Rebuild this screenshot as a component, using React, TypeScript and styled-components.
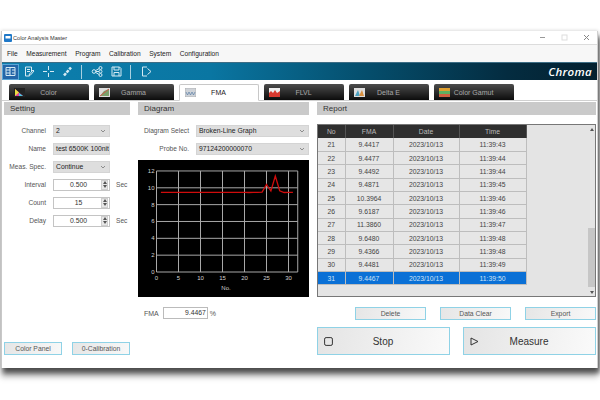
import React from "react";
import styled, { createGlobalStyle } from "styled-components";

const Global = createGlobalStyle`
  html, body { margin: 0; padding: 0; background: #fff; width: 600px; height: 400px; overflow: hidden; }
  body { font-family: "Liberation Sans", Arial, sans-serif; }
  * { box-sizing: border-box; }
`;

const Page = styled.div`
  padding: 31px 2px 0 1px;
`;
const Win = styled.div`
  width: 597px;
  height: 337px;
  background: #fff;
  display: flex;
  flex-direction: column;
  border-left: 1px solid #c8c8c8;
  border-right: 1px solid #d0d0d0;
  box-shadow: 0 -1px 3px rgba(0,0,0,0.12), 2px 5px 5px rgba(0,0,0,0.6), 0 9px 6px rgba(0,0,0,0.25);
`;
const TitleBar = styled.div`
  height: 14px;
  display: flex;
  align-items: center;
  padding: 0 0 0 2px;
  gap: 1px;
  font-size: 5.6px;
  color: #333;
  border-bottom: 1px solid #dcdcdc;
`;
const TitleText = styled.span`
  flex: 1;
`;
const WinButton = styled.span`
  width: 21px;
  display: flex;
  justify-content: center;
  align-items: center;
`;
const MenuBar = styled.div`
  height: 17px;
  background: #f7f7f7;
  display: flex;
  align-items: center;
  padding-left: 5px;
  gap: 8.6px;
  font-size: 6.6px;
  color: #222;
`;
const Toolbar = styled.div`
  height: 18px;
  background: linear-gradient(90deg, #0d7fae 0%, #0a76a2 35%, #05506f 60%, #042c40 85%, #03202f 100%);
  display: flex;
  align-items: center;
  border-top: 1px solid #3d6d85;
`;
const ToolBtn = styled.span<{ $active?: boolean }>`
  width: 17px;
  height: 16px;
  margin-right: 2px;
  display: flex;
  align-items: center;
  justify-content: center;
  background: ${(p) => (p.$active ? "#2566a8" : "transparent")};
  border: 1px solid ${(p) => (p.$active ? "#5aa6d6" : "transparent")};
`;
const ToolSep = styled.span`
  width: 1px;
  height: 14px;
  background: #a9d0e0;
  margin: 0 7px 0 3px;
`;
const Brand = styled.span`
  margin-left: auto;
  margin-right: 5px;
  font-family: "Open Sans", sans-serif;
  font-style: italic;
  font-weight: 600;
  font-size: 11.5px;
  letter-spacing: 0.3px;
  color: #fff;
`;
const TabRow = styled.div`
  height: 21px;
  padding: 4px 0 0 7px;
  display: flex;
  gap: 5px;
  border-bottom: 1px solid #d0d0d0;
`;
const Tab = styled.div<{ $active?: boolean }>`
  width: 80px;
  height: ${(p) => (p.$active ? "17px" : "16px")};
  display: flex;
  align-items: center;
  font-size: 7px;
  padding-left: 5px;
  color: ${(p) => (p.$active ? "#222" : "#a8a8a8")};
  background: ${(p) => (p.$active ? "#fff" : "linear-gradient(#4c4c4c, #0c0c0c)")};
  border: ${(p) => (p.$active ? "1px solid #c8c8c8" : "none")};
  border-bottom: ${(p) => (p.$active ? "1px solid #fff" : "none")};
  border-radius: 2px 2px 0 0;
`;
const TabLabel = styled.span`
  flex: 1;
  text-align: center;
  padding-right: 17px;
`;
const Main = styled.div`
  flex: 1;
  display: grid;
  grid-template-columns: 126px 171px 279px;
  column-gap: 8px;
  padding: 1px 0 0 2px;
`;
const Column = styled.div`
  display: flex;
  flex-direction: column;
  min-height: 0;
`;
const SectionHead = styled.div`
  height: 13px;
  background: #cacaca;
  font-size: 8px;
  color: #333;
  display: flex;
  align-items: center;
  padding-left: 6px;
  flex: none;
`;
const Form = styled.div`
  display: flex;
  flex-direction: column;
  gap: 7px;
  padding-top: 10px;
`;
const FormRow = styled.div`
  display: flex;
  align-items: center;
  height: 11px;
`;
const Label = styled.span<{ $w: number }>`
  width: ${(p) => p.$w}px;
  text-align: right;
  font-size: 6.6px;
  color: #555;
  margin-right: 7px;
  white-space: nowrap;
  flex: none;
`;
const SelectBox = styled.div<{ $w: number }>`
  width: ${(p) => p.$w}px;
  height: 12px;
  background: #dedede;
  border: 1px solid #d4d4d4;
  display: flex;
  align-items: center;
  justify-content: space-between;
  padding: 0 3px 0 2px;
  font-size: 6.8px;
  color: #222;
  white-space: nowrap;
  overflow: hidden;
`;
const NumBox = styled.div`
  width: 57px;
  height: 12px;
  background: #fff;
  border: 1px solid #c4c4c4;
  display: flex;
  align-items: center;
  font-size: 6.8px;
  color: #333;
`;
const NumValue = styled.span`
  flex: 1;
  text-align: center;
  padding-left: 2px;
`;
const Spin = styled.span`
  width: 7px;
  height: 10px;
  margin-right: 1px;
  background: #e8e8e8;
  border: 1px solid #cfcfcf;
  display: flex;
  flex-direction: column;
  align-items: center;
  justify-content: space-around;
`;
const Unit = styled.span`
  font-size: 6.6px;
  color: #555;
  margin-left: 6px;
`;
const BottomLeft = styled.div`
  margin-top: auto;
  margin-bottom: 13px;
  display: flex;
  justify-content: space-between;
`;
const SkyButton = styled.button<{ $w?: number; $h?: number }>`
  width: ${(p) => (p.$w ? `${p.$w}px` : "auto")};
  height: ${(p) => p.$h ?? 13}px;
  border: 1px solid #8fd2e6;
  background: linear-gradient(100deg, #e6e6e6, #f8f8f8);
  font-family: inherit;
  font-size: 6.8px;
  color: #555;
  padding: 0;
  border-radius: 0;
`;
const ChartWrap = styled.div`
  margin-top: 6px;
  height: 137px;
  background: #000;
  flex: none;
`;
const FmaRow = styled.div`
  display: flex;
  align-items: center;
  margin-top: 10px;
  padding-left: 6px;
  font-size: 7px;
  color: #555;
`;
const FmaInput = styled.div`
  width: 45px;
  height: 12px;
  border: 1px solid #bbb;
  margin: 0 2px 0 4px;
  text-align: right;
  padding-right: 1px;
  font-size: 6.8px;
  line-height: 10px;
  color: #333;
`;
const ReportBox = styled.div`
  margin-top: 9px;
  height: 173px;
  border: 1px solid #777;
  background: #e4e4e4;
  display: flex;
  flex: none;
`;
const Table = styled.table`
  width: 208px;
  border-collapse: collapse;
  table-layout: fixed;
  align-self: flex-start;
  font-size: 6.8px;
  color: #444;
`;
const Th = styled.th<{ $w: number }>`
  width: ${(p) => p.$w}px;
  height: 13px;
  background: #2f2f2f;
  color: #bbb;
  font-weight: 400;
  padding: 0;
  border-right: 1px solid #555;
`;
const Tr = styled.tr<{ $sel?: boolean }>`
  height: 13.35px;
  background: ${(p) => (p.$sel ? "#0a70d6" : "#e6e6e6")};
  color: ${(p) => (p.$sel ? "#cfe3f7" : "#444")};
`;
const Td = styled.td`
  padding: 0;
  text-align: center;
  border-right: 1px solid #bdbdbd;
  border-bottom: 1px solid #bdbdbd;
`;
const ScrollBar = styled.div`
  margin-left: auto;
  width: 7px;
  display: flex;
  flex-direction: column;
  justify-content: space-between;
  align-items: center;
  padding: 3px 0 2px;
  background: linear-gradient(#e4e4e4 60%, #c6c6c6 60%, #c6c6c6 95%, #e4e4e4 95%);
`;
const ActionRow = styled.div`
  margin-top: 10px;
  display: flex;
  justify-content: flex-end;
  gap: 14px;
`;
const BigRow = styled.div`
  margin-top: 7px;
  display: flex;
  justify-content: space-between;
`;
const BigButton = styled.button`
  width: 133px;
  height: 28px;
  border: 1px solid #8fd2e6;
  background: linear-gradient(100deg, #e4e4e4, #fafafa);
  font-family: inherit;
  font-size: 10px;
  color: #333;
  display: flex;
  align-items: center;
  padding: 0 0 0 6px;
`;
const BigLabel = styled.span`
  flex: 1;
  text-align: center;
  padding-right: 16px;
`;

const Chev = () => (
  <svg width="6" height="4" viewBox="0 0 6 4"><path d="M1 1l2 2 2-2" fill="none" stroke="#777" strokeWidth="0.8" /></svg>
);
const Tri = ({ up }: { up?: boolean }) => (
  <svg width="4" height="3" viewBox="0 0 4 3"><path d={up ? "M0 3L2 0l2 3z" : "M0 0l2 3 2-3z"} fill="#555" /></svg>
);
const Ico = ({ children }: { children: React.ReactNode }) => (
  <svg width="13" height="13" viewBox="0 0 13 13" fill="none" stroke="#d5eaf3" strokeWidth="1">{children}</svg>
);
const TabIcon = ({ children }: { children: React.ReactNode }) => (
  <svg width="11" height="9" viewBox="0 0 11 9" style={{ flex: "none" }}>{children}</svg>
);

const Num = ({ v }: { v: string }) => (
  <NumBox>
    <NumValue>{v}</NumValue>
    <Spin><Tri up /><Tri /></Spin>
  </NumBox>
);

const rows = [
  ["21", "9.4417", "11:39:43"],
  ["22", "9.4477", "11:39:44"],
  ["23", "9.4492", "11:39:44"],
  ["24", "9.4871", "11:39:45"],
  ["25", "10.3964", "11:39:46"],
  ["26", "9.6187", "11:39:46"],
  ["27", "11.3860", "11:39:47"],
  ["28", "9.6480", "11:39:48"],
  ["29", "9.4366", "11:39:48"],
  ["30", "9.4481", "11:39:49"],
  ["31", "9.4467", "11:39:50"],
];

const Chart = () => {
  const x = (n: number) => 18.5 + n * 4.4;
  const y = (v: number) => 112 - v * 8.42;
  const xs = [0, 5, 10, 15, 20, 25, 30];
  const ys = [0, 2, 4, 6, 8, 10, 12];
  const data = [9.45, 9.45, 9.45, 9.45, 9.45, 9.45, 9.45, 9.45, 9.45, 9.45, 9.45, 9.45, 9.45, 9.45, 9.45, 9.45, 9.45, 9.45, 9.45, 9.45, 9.44, 9.45, 9.45, 9.49, 10.4, 9.62, 11.39, 9.65, 9.44, 9.45, 9.45];
  const pts = data.map((v, i) => `${x(i + 1)},${y(v)}`).join(" ");
  return (
    <svg width="171" height="137" viewBox="0 0 171 137">
      {xs.map((n) => (
        <line key={n} x1={x(n)} x2={x(n)} y1={y(12)} y2={y(0)} stroke="#a8a8a8" strokeWidth="1" />
      ))}
      <line x1={x(32.1)} x2={x(32.1)} y1={y(12)} y2={y(0)} stroke="#a8a8a8" strokeWidth="1" />
      {ys.map((n) => (
        <line key={n} x1={x(0)} x2={x(32.1)} y1={y(n)} y2={y(n)} stroke="#a8a8a8" strokeWidth="1" />
      ))}
      <polyline points={pts} fill="none" stroke="#d00c0c" strokeWidth="1.3" />
      {ys.map((n) => (
        <text key={n} x={x(0) - 2} y={y(n) + 2} fontSize="6" fill="#d0d0d0" textAnchor="end" fontFamily="Liberation Sans">{n}</text>
      ))}
      {xs.map((n) => (
        <text key={n} x={x(n)} y={120} fontSize="6" fill="#d0d0d0" textAnchor="middle" fontFamily="Liberation Sans">{n}</text>
      ))}
      <text x="88" y="130" fontSize="6" fill="#d0d0d0" textAnchor="middle" fontFamily="Liberation Sans">No.</text>
    </svg>
  );
};

export default function App() {
  return (
    <Page>
      <Global />
      <Win>
        <TitleBar>
          <svg width="8" height="8" viewBox="0 0 8 8">
            <rect width="8" height="8" rx="1" fill="#1f78c8" />
            <rect x="1.5" y="2" width="5" height="2.5" fill="#fff" />
          </svg>
          <TitleText>Color Analysis Master</TitleText>
          <WinButton><svg width="7" height="7" viewBox="0 0 7 7"><path d="M1 3.5h5" stroke="#999" /></svg></WinButton>
          <WinButton><svg width="7" height="7" viewBox="0 0 7 7"><rect x="1" y="1" width="5" height="5" fill="none" stroke="#ddd" /></svg></WinButton>
          <WinButton><svg width="7" height="7" viewBox="0 0 7 7"><path d="M1 1l5 5M6 1L1 6" stroke="#888" /></svg></WinButton>
        </TitleBar>
        <MenuBar>
          <span>File</span><span>Measurement</span><span>Program</span><span>Calibration</span><span>System</span><span>Configuration</span>
        </MenuBar>
        <Toolbar>
          <ToolBtn $active>
            <Ico><path d="M2 2.5h9v8H2zM6 2.5v8M2 5h4M2 8h4M8 5h3M8 8h3" /></Ico>
          </ToolBtn>
          <ToolBtn>
            <Ico><path d="M2.5 2h6v5M2.5 2v9h4M4 4.5h3M4 6.5h3M11 6l-3.5 4-1.5.5.5-1.5 3.5-4z" /></Ico>
          </ToolBtn>
          <ToolBtn>
            <Ico><path d="M6.5 1v4M6.5 8v4M1 6.5h4M8 6.5h4" /></Ico>
          </ToolBtn>
          <ToolBtn>
            <Ico><path d="M3 10.5l7-8" strokeWidth="2.6" strokeDasharray="3 1" /></Ico>
          </ToolBtn>
          <ToolSep />
          <ToolBtn>
            <Ico><circle cx="3" cy="6.5" r="1.8" /><circle cx="9.5" cy="3" r="1.5" /><circle cx="9.5" cy="6.5" r="1.5" /><circle cx="9.5" cy="10" r="1.5" /><path d="M4.6 5.6L8 3.6M4.8 6.5H8M4.6 7.4L8 9.4" /></Ico>
          </ToolBtn>
          <ToolBtn>
            <Ico><path d="M2 2h7.5L11 3.5V11H2zM4 2v3h5V2M4 11V7.500h5V11" /></Ico>
          </ToolBtn>
          <ToolSep />
          <ToolBtn>
            <Ico><path d="M7 2H2.500v9H7M7.500 3.500L11 6.500 7.500 9.500" /></Ico>
          </ToolBtn>
          <Brand>Chroma</Brand>
        </Toolbar>
        <TabRow>
          <Tab>
            <TabIcon><rect width="11" height="9" fill="#222" /><path d="M1 1l8 7H1z" fill="#e03fa0" /><path d="M1 1l4 3.500L1 8z" fill="#e8e040" /><path d="M5 5l4 3H5z" fill="#45c8e0" /></TabIcon>
            <TabLabel>Color</TabLabel>
          </Tab>
          <Tab>
            <TabIcon><rect width="11" height="9" fill="#ddd" /><path d="M1 8l4-5 5-2v7z" fill="#7aa06a" /><path d="M1 8l9-7" stroke="#d0584c" /></TabIcon>
            <TabLabel>Gamma</TabLabel>
          </Tab>
          <Tab $active>
            <TabIcon><rect width="11" height="9" fill="#cfd3d8" stroke="#999" strokeWidth="0.5" /><path d="M1 4l1.500 3 1.500-3 1.500 3 1.500-3 1.500 3 1.500-3" stroke="#5b7fa8" fill="none" strokeWidth="0.7" /></TabIcon>
            <TabLabel>FMA</TabLabel>
          </Tab>
          <Tab>
            <TabIcon><rect width="11" height="9" fill="#eee" /><path d="M0 5l2-2 2 2 2-3 2 3 3-2v6H0z" fill="#d8392f" /></TabIcon>
            <TabLabel>FLVL</TabLabel>
          </Tab>
          <Tab>
            <TabIcon><rect width="11" height="9" fill="#ddd" /><path d="M1 8l3-6 2 6z" fill="#4aa0c0" /><path d="M5 8l3-6 2 6z" fill="#d89040" /></TabIcon>
            <TabLabel>Delta E</TabLabel>
          </Tab>
          <Tab>
            <TabIcon><rect width="11" height="3" fill="#e0a030" /><rect y="3" width="11" height="3" fill="#60b060" /><rect y="6" width="11" height="3" fill="#d06040" /></TabIcon>
            <TabLabel>Color Gamut</TabLabel>
          </Tab>
        </TabRow>
        <Main>
          <Column>
            <SectionHead>Setting</SectionHead>
            <Form>
              <FormRow><Label $w={42}>Channel</Label><SelectBox $w={57}><span>2</span><Chev /></SelectBox></FormRow>
              <FormRow><Label $w={42}>Name</Label><SelectBox $w={57}><span>test 6500K 100nit</span></SelectBox></FormRow>
              <FormRow><Label $w={42}>Meas. Spec.</Label><SelectBox $w={57}><span>Continue</span><Chev /></SelectBox></FormRow>
              <FormRow><Label $w={42}>Interval</Label><Num v="0.500" /><Unit>Sec</Unit></FormRow>
              <FormRow><Label $w={42}>Count</Label><Num v="15" /></FormRow>
              <FormRow><Label $w={42}>Delay</Label><Num v="0.500" /><Unit>Sec</Unit></FormRow>
            </Form>
            <BottomLeft>
              <SkyButton $w={58}>Color Panel</SkyButton>
              <SkyButton $w={58}>0-Calibration</SkyButton>
            </BottomLeft>
          </Column>
          <Column>
            <SectionHead>Diagram</SectionHead>
            <Form>
              <FormRow><Label $w={51}>Diagram Select</Label><SelectBox $w={113}><span>Broken-Line Graph</span><Chev /></SelectBox></FormRow>
              <FormRow><Label $w={51}>Probe No.</Label><SelectBox $w={113}><span>97124200000070</span><Chev /></SelectBox></FormRow>
            </Form>
            <ChartWrap><Chart /></ChartWrap>
            <FmaRow>FMA<FmaInput>9.4467</FmaInput>%</FmaRow>
          </Column>
          <Column>
            <SectionHead>Report</SectionHead>
            <ReportBox>
              <Table>
                <thead>
                  <tr><Th $w={27}>No</Th><Th $w={48}>FMA</Th><Th $w={66}>Date</Th><Th $w={67}>Time</Th></tr>
                </thead>
                <tbody>
                  {rows.map((r, i) => (
                    <Tr key={r[0]} $sel={i === rows.length - 1}>
                      <Td>{r[0]}</Td><Td>{r[1]}</Td><Td>2023/10/13</Td><Td>{r[2]}</Td>
                    </Tr>
                  ))}
                </tbody>
              </Table>
              <ScrollBar><Tri up /><Tri /></ScrollBar>
            </ReportBox>
            <ActionRow>
              <SkyButton $w={71}>Delete</SkyButton>
              <SkyButton $w={71}>Data Clear</SkyButton>
              <SkyButton $w={71}>Export</SkyButton>
            </ActionRow>
            <BigRow>
              <BigButton>
                <svg width="9" height="9" viewBox="0 0 9 9"><rect x="0.6" y="0.6" width="7.8" height="7.8" rx="1.500" fill="none" stroke="#333" /></svg>
                <BigLabel>Stop</BigLabel>
              </BigButton>
              <BigButton>
                <svg width="9" height="9" viewBox="0 0 9 9"><path d="M1 1l7 3.500L1 8z" fill="none" stroke="#333" /></svg>
                <BigLabel>Measure</BigLabel>
              </BigButton>
            </BigRow>
          </Column>
        </Main>
      </Win>
    </Page>
  );
}
